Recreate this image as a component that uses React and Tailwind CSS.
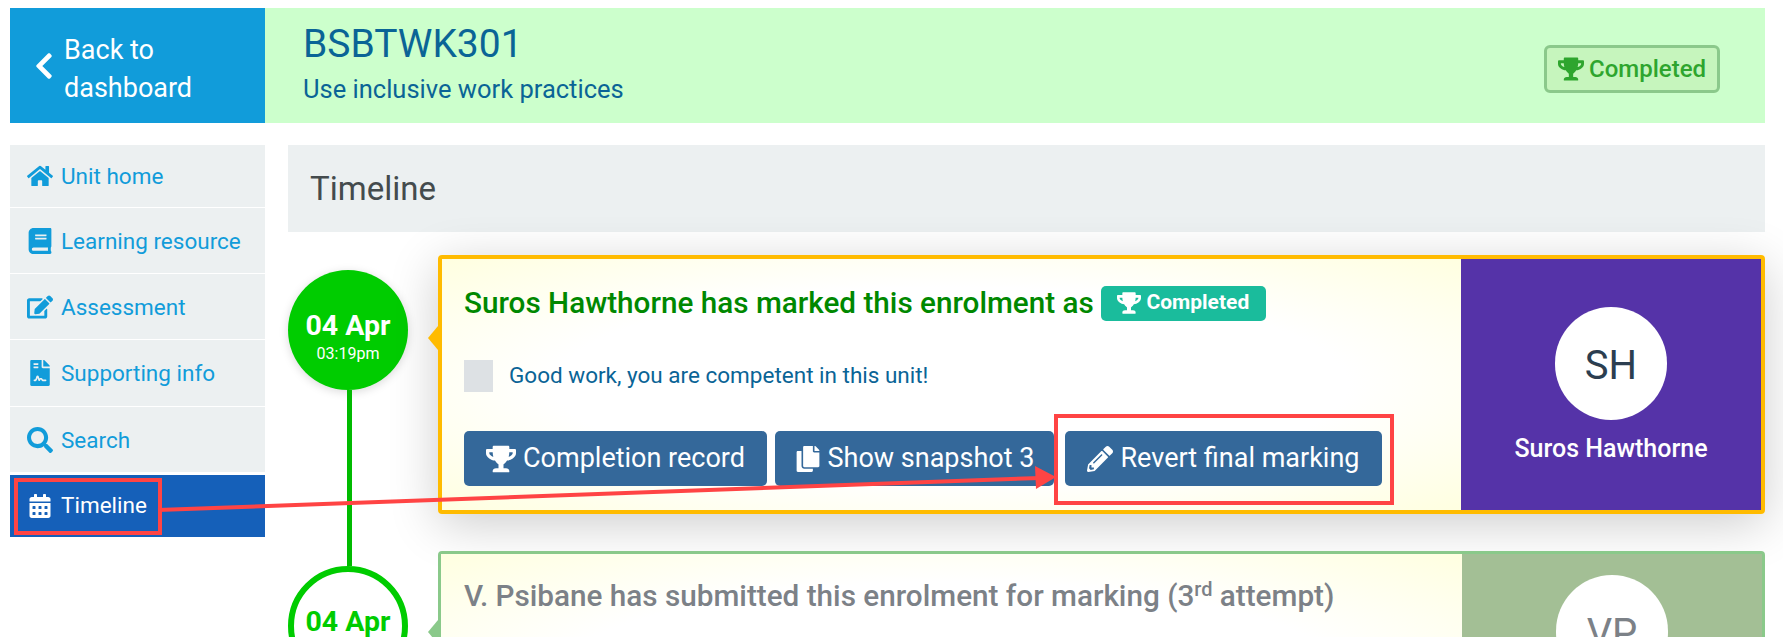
import React from 'react'
import {
  FaBook,
  FaCalendarAlt,
  FaChevronLeft,
  FaCopy,
  FaEdit,
  FaFileContract,
  FaHome,
  FaPencilAlt,
  FaSearch,
  FaTrophy,
} from 'react-icons/fa'

const NAV = [
  { label: 'Unit home', icon: FaHome, height: 'h-[63px]' },
  { label: 'Learning resource', icon: FaBook, height: 'h-[66px]' },
  { label: 'Assessment', icon: FaEdit, height: 'h-[66px]' },
  { label: 'Supporting info', icon: FaFileContract, height: 'h-[67px]' },
  { label: 'Search', icon: FaSearch, height: 'h-[66px]' },
]

function ActionButton({ icon: Icon, width, iconSize = 26, children }) {
  return (
    <button className={`${width} h-[55px] flex items-center justify-center gap-[7px] rounded-[5px] bg-[#34689a] text-white text-[27px]`}>
      <Icon size={iconSize} />
      {children}
    </button>
  )
}

function Annotations() {
  return (
    <>
      <div className="absolute left-[14px] top-[478px] w-[148px] h-[57px] border-[4px] border-[#ff4444]" />
      <div className="absolute left-[1054px] top-[414px] w-[340px] h-[91px] border-[4px] border-[#ff4444]" />
      <svg className="absolute left-0 top-0 pointer-events-none" width="1783" height="637">
        <line x1="158" y1="510" x2="1040" y2="478" stroke="#ff4444" strokeWidth="4" />
        <polygon points="1056,477 1035,466 1036,489" fill="#ff4444" />
      </svg>
    </>
  )
}

export default function App() {
  return (
    <div className="relative h-[637px] overflow-hidden bg-white pt-[8px] font-['Roboto',sans-serif]">
      <header className="flex h-[115px] ml-[10px] mr-[18px]">
        <a className="w-[255px] flex items-center bg-[#119cda] text-white text-[27px] leading-[38px] pl-[19px]">
          <FaChevronLeft size={30} className="mr-[5px] shrink-0" />
          <span className="w-[140px] pt-[6px]">Back to dashboard</span>
        </a>
        <div className="flex-1 flex items-center justify-between bg-[#ccffcc] pl-[38px] pr-[45px]">
          <div className="text-[#0a6496] pb-[4px]">
            <div className="text-[39px] leading-[44px] mb-[7px]">BSBTWK301</div>
            <div className="text-[25.5px] leading-[32px]">Use inclusive work practices</div>
          </div>
          <div className="flex items-center gap-[5px] w-[176px] h-[48px] mt-[6px] justify-center rounded-[6px] border-[3px] border-[#8bc98b] bg-[#c6f5bd] text-[#2ea52e] text-[24px] font-medium">
            <FaTrophy size={26} />
            Completed
          </div>
        </div>
      </header>

      <div className="flex mt-[22px] ml-[10px] mr-[18px]">
        <nav className="w-[255px] shrink-0">
          {NAV.map(({ label, icon: Icon, height }) => (
            <a key={label} className={`${height} flex items-center gap-[8px] bg-[#ecf0f1] border-b border-white pl-[17px] text-[22.5px] text-[#119cda]`}>
              <span className="w-[26px] flex justify-center"><Icon size={26} /></span>
              <span className="pt-[2px]">{label}</span>
            </a>
          ))}
          <a className="h-[62px] mt-[2px] flex items-center gap-[8px] bg-[#1560b9] pl-[17px] text-[22.5px] text-white">
            <span className="w-[26px] flex justify-center"><FaCalendarAlt size={24} /></span>
            Timeline
          </a>
        </nav>

        <main className="flex-1 ml-[23px]">
          <h1 className="h-[87px] flex items-center bg-[#ecf0f1] pl-[22px] text-[33px] text-[#444b4d]">Timeline</h1>

          <section className="mt-[23px]">
            <div className="flex">
              <div className="w-[150px] shrink-0 flex flex-col">
                <div className="h-[15px]" />
                <div className="w-[120px] h-[120px] shrink-0 rounded-full bg-[#00cc00] text-white flex flex-col items-center pt-[39px] shadow-[0_2px_10px_rgba(0,0,0,0.15)]">
                  <div className="text-[28.5px] leading-[34px] font-bold">04 Apr</div>
                  <div className="text-[16px] leading-[22px]">03:19pm</div>
                </div>
                <div className="w-[5px] flex-1 bg-[#00bb00] ml-[59px]" />
              </div>

              <div className="flex-1 pb-[37px]">
                <div className="relative h-[259px] flex rounded-[4px] border-[4px] border-[#ffbb00] shadow-[0_10px_50px_rgba(0,0,0,0.2)]">
                  <div className="absolute -left-[14px] top-[67px] w-0 h-0 border-y-[12px] border-y-transparent border-r-[10px] border-r-[#ffbb00]" />
                  <div className="flex-1 pl-[22px] bg-[radial-gradient(ellipse_at_center,#ffffff_55%,#ffffe0_100%)]">
                    <div className="flex items-center h-[36px] mt-[26px]">
                      <span className="text-[29.7px] font-medium text-[#008800]">Suros Hawthorne has marked this enrolment as</span>
                      <span className="ml-[7px] h-[35px] w-[165px] flex items-center justify-center gap-[5px] rounded-[5px] bg-[#1abc9c] text-white text-[21px] font-bold">
                        <FaTrophy size={24} />
                        Completed
                      </span>
                    </div>
                    <div className="flex items-center mt-[39px] h-[32px]">
                      <div className="w-[29px] h-[32px] bg-[#dde1e4]" />
                      <span className="ml-[16px] text-[22.5px] text-[#0a6496]">Good work, you are competent in this unit!</span>
                    </div>
                    <div className="flex items-center mt-[39px]">
                      <ActionButton icon={FaTrophy} iconSize={30} width="w-[303px]">Completion record</ActionButton>
                      <div className="w-[8px]" />
                      <ActionButton icon={FaCopy} width="w-[279px]">Show snapshot 3</ActionButton>
                      <div className="w-[11px]" />
                      <ActionButton icon={FaPencilAlt} width="w-[317px]">Revert final marking</ActionButton>
                    </div>
                  </div>
                  <div className="w-[300px] shrink-0 bg-[#5533a8] flex flex-col items-center pt-[48px]">
                    <div className="w-[112px] h-[113px] pt-[4px] rounded-full bg-white flex items-center justify-center text-[40px] text-[#2c3e50]">SH</div>
                    <div className="mt-[10px] text-white text-[25px] font-medium">Suros Hawthorne</div>
                  </div>
                </div>
              </div>
            </div>

            <div className="flex">
              <div className="w-[150px] shrink-0 flex flex-col">
                <div className="w-[5px] h-[15px] bg-[#00bb00] ml-[59px]" />
                <div className="w-[120px] h-[120px] shrink-0 rounded-full bg-white border-[6px] border-[#00cc00] text-[#00cc00] flex flex-col items-center pt-[33px]">
                  <div className="text-[28.5px] leading-[34px] font-bold">04 Apr</div>
                </div>
              </div>

              <div className="flex-1">
                <div className="relative h-[259px] flex rounded-[4px] border-[3px] border-[#8ac98a]">
                  <div className="absolute -left-[13px] top-[66px] w-0 h-0 border-y-[12px] border-y-transparent border-r-[10px] border-r-[#8ac98a]" />
                  <div className="flex-1 pl-[23px] pt-[20px] bg-[radial-gradient(ellipse_at_center,#ffffff_55%,#ffffe0_100%)]">
                    <div className="text-[29.7px] font-medium text-[#7c8187]">
                      V. Psibane has submitted this enrolment for marking (3<sup className="text-[20px]">rd</sup> attempt)
                    </div>
                  </div>
                  <div className="w-[300px] shrink-0 bg-[#a3bf95] flex flex-col items-center pt-[21px]">
                    <div className="w-[112px] h-[113px] pt-[4px] rounded-full bg-white flex items-center justify-center text-[40px] text-[#7c8187]">VP</div>
                  </div>
                </div>
              </div>
            </div>
          </section>
        </main>
      </div>

      <Annotations />
    </div>
  )
}
